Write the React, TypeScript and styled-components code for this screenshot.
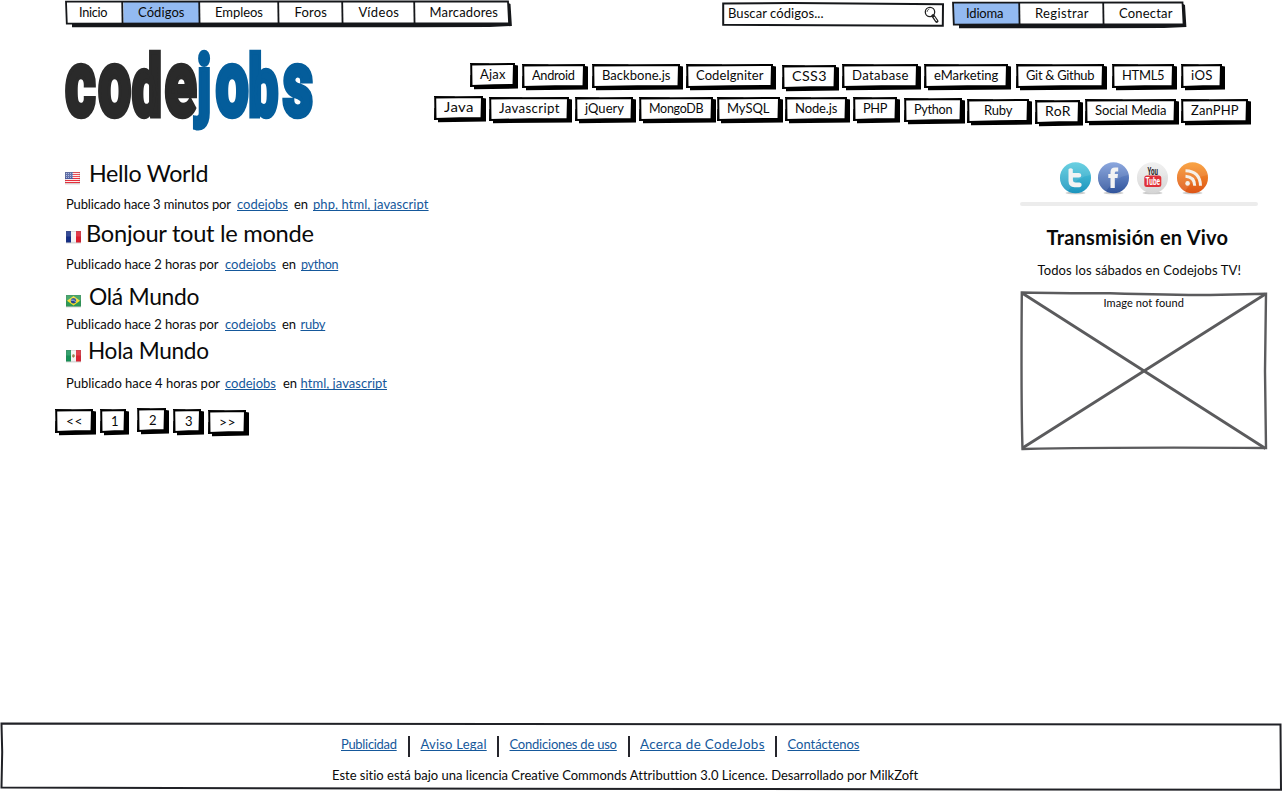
import React, { useLayoutEffect, useRef } from "react";
import styled, { createGlobalStyle } from "styled-components";

const Global = createGlobalStyle`
  * { box-sizing: border-box; }
  body { margin: 0; background: #fff; color: #0a0a0a; font-family: Lato, "Open Sans", sans-serif; font-size: 13px; overflow: hidden; }
`;

const Page = styled.div`
  width: 1282px;
  height: 791px;
  display: flex;
  flex-direction: column;
  background: #fff;
`;

type TextStyle = { $w: number; $gap?: number; $size?: number; $bold?: boolean; $line?: number };
const TextBox = styled.span<TextStyle>`
  position: relative;
  flex: none;
  display: block;
  width: ${(p) => p.$w}px;
  margin-left: ${(p) => p.$gap ?? 0}px;
  font-size: ${(p) => p.$size ?? 13}px;
  font-weight: ${(p) => (p.$bold ? 700 : 400)};
  line-height: ${(p) => p.$line ?? 16}px;
  white-space: pre;
`;
const Ink = styled.span`
  display: inline-block;
  transform-origin: 0 0;
`;
const LinkInk = styled(Ink).attrs({ as: "a" })`
  color: #15589b;
  text-decoration: underline;
  text-decoration-thickness: 1px;
  text-underline-offset: 1px;
  text-decoration-skip-ink: none;
`;

/* Spreads a label over a fixed measure: a little tracking first, then glyph width. */
function Label({ text, w, gap, size, bold, line, link }: {
  text: string; w: number; gap?: number; size?: number; bold?: boolean; line?: number; link?: boolean;
}) {
  const ref = useRef<HTMLElement>(null);
  useLayoutEffect(() => {
    const el = ref.current;
    if (!el || text.length < 2) return;
    el.style.letterSpacing = "0px";
    el.style.transform = "none";
    const goal = w + 0.5;
    const natural = el.getBoundingClientRect().width;
    const tracking = Math.max(-0.3, Math.min(0.35, (goal - natural) / (text.length - 1)));
    el.style.letterSpacing = `${tracking}px`;
    el.style.transform = `scaleX(${goal / (natural + tracking * (text.length - 1))})`;
  }, [text, w]);
  const C: any = link ? LinkInk : Ink;
  return (
    <TextBox $w={w} $gap={gap} $size={size} $bold={bold} $line={line}>
      <C ref={ref}>{text}</C>
    </TextBox>
  );
}

/* ---------- hand-drawn buttons ---------- */
const Backdrop = styled.svg`
  position: absolute;
  inset: 0;
  overflow: visible;
`;
const ButtonBox = styled.button<{ $w: number; $gap: number; $drop: number; $pad: number }>`
  position: relative;
  flex: none;
  display: flex;
  width: ${(p) => p.$w}px;
  height: 26px;
  margin: ${(p) => p.$drop}px 0 0 ${(p) => p.$gap}px;
  padding: 3.5px 0 0 ${(p) => p.$pad}px;
  border: 0;
  background: none;
  color: inherit;
  font: inherit;
  text-align: left;
`;

function SketchButton({ text, w, gap, drop, tw, pad = 10 }: {
  text: string; w: number; gap: number; drop: number; tw: number; pad?: number;
}) {
  return (
    <ButtonBox $w={w} $gap={gap} $drop={drop} $pad={pad}>
      <Backdrop width={w} height={26}>
        <path d={`M4 5L${w - 3} 2L${w} 2.5L${w} 25.5L4 26.2Z`} fill="#000" />
        <path d={`M1.2 1.4L${w - 4} 1L${w - 4.5} 22L${w / 2} 22.2L1.5 23Z`} fill="#fff" stroke="#000" strokeWidth="2" />
        <path d={`M0 .5L${w * 0.4} 1M1 12L.6 24`} stroke="#000" strokeWidth="1.2" />
      </Backdrop>
      <Label text={text} w={tw} />
    </ButtonBox>
  );
}

/* ---------- top bar ---------- */
const TopBar = styled.nav`
  display: flex;
  height: 51px;
  padding-left: 65px;
`;
const MenuBox = styled.div<{ $w: number; $gap?: number; $top: number }>`
  position: relative;
  flex: none;
  display: flex;
  width: ${(p) => p.$w}px;
  height: 28px;
  margin: ${(p) => p.$top}px 0 0 ${(p) => p.$gap ?? 0}px;
`;
const MenuItem = styled.a<{ $w: number; $pad: number }>`
  position: relative;
  display: flex;
  flex: none;
  width: ${(p) => p.$w}px;
  padding: 3px 0 0 ${(p) => p.$pad}px;
`;
type Entry = { text: string; w: number; pad: number; tw: number; on?: boolean };
function Menu({ items, gap, top }: { items: Entry[]; gap?: number; top: number }) {
  const total = items.reduce((s, i) => s + i.w, 0);
  let at = 0;
  const cells = items.map((i) => {
    const x = at;
    at += i.w;
    return { ...i, x };
  });
  return (
    <MenuBox $w={total + 2} $gap={gap} $top={top}>
      <Backdrop width={total + 2} height={28}>
        <path d={`M7 22L${total - 1} 22L${total - 1} 2L${total + 1} 3L${total + 2.4} 25L${total - 20} 26L${total - 94} 26.2L7 26.2Z`} fill="#15171a" />
        <path d={`M1 .6L${total - 2} .4L${total - 0.4} 22.2L1.6 22.6Z`} fill="#fff" />
        {cells.filter((c) => c.on).map((c) => (
          <rect key={c.text} x={c.x + 1.5} y="1" width={c.w - 1.5} height="21.5" fill="#93baf1" />
        ))}
        <path d={`M1 .6L${total - 1.5} .4L${total - 0.4} 22.4L${total / 2} 22.4L1.8 22.6Z`} fill="none" stroke="#15171a" strokeWidth="1.8" />
        {cells.slice(1).map((c) => (
          <path key={c.text} d={`M${c.x + 0.2} .6L${c.x + 0.6} 26`} stroke="#15171a" strokeWidth="1.8" />
        ))}
      </Backdrop>
      {items.map((i) => (
        <MenuItem key={i.text} $w={i.w} $pad={i.pad}>
          <Label text={i.text} w={i.tw} />
        </MenuItem>
      ))}
    </MenuBox>
  );
}
const SearchBox = styled.div`
  position: relative;
  flex: none;
  display: flex;
  width: 222px;
  height: 25px;
  margin: 2px 0 0 210px;
  padding: 3px 0 0 6.5px;
`;
const Lens = styled.svg`
  position: relative;
  flex: none;
  margin-left: 100.5px;
  margin-top: 1px;
`;

/* ---------- header ---------- */
const Header = styled.header`
  display: flex;
  height: 101px;
`;
const Logo = styled.svg`
  flex: none;
  overflow: visible;
  margin-left: 65px;
`;
const Tags = styled.div`
  margin: 11.5px 0 0 119px;
`;
const TagRow = styled.div<{ $indent: number }>`
  display: flex;
  height: 33px;
  padding-left: ${(p) => p.$indent}px;
`;

type Btn = [string, number, number, number, number, number?];
const tagsTop: Btn[] = [
  ["Ajax", 48, 0, 0, 25], ["Android", 66, 4, 1, 42.5], ["Backbone.js", 91, 4, 1, 68],
  ["CodeIgniter", 90, 3, 1, 67], ["CSS3", 57, 6, 2, 34], ["Database", 79, 3, 1, 56],
  ["eMarketing", 87, 3, 1, 64], ["Git & Github", 91, 5, 1, 68], ["HTML5", 65, 5, 1, 42], ["iOS", 44, 4, 1, 21],
];
const tagsBottom: Btn[] = [
  ["Java", 52, 0, 0, 29], ["Javascript", 83, 3, 1, 60], ["jQuery", 61, 3, 1, 38.5],
  ["MongoDB", 77, 3, 1, 54], ["MySQL", 66, 1, 1, 42], ["Node.js", 65, 2, 1, 42], ["PHP", 47, 3, 1, 24],
  ["Python", 61, 4, 2, 38], ["Ruby", 65, 2, 3, 28, 17], ["RoR", 48, 3, 4, 25],
  ["Social Media", 94, 2, 3, 71], ["ZanPHP", 70, 2, 3, 47],
];
const pages: Btn[] = [
  ["<<", 41, 0, 1, 16, 11], ["1", 29, 4, 1, 7, 11], ["2", 32, 8, 0, 7, 12], ["3", 31, 4, 1, 7, 12], [">>", 41, 4, 2, 16, 11],
];
const buttons = (list: Btn[]) =>
  list.map(([text, w, gap, drop, tw, pad]) => (
    <SketchButton key={text} text={text} w={w} gap={gap} drop={drop} tw={tw} pad={pad} />
  ));

/* ---------- content ---------- */
const Main = styled.main`
  display: flex;
  height: 570px;
`;
const Posts = styled.section`
  width: 1020px;
  padding-top: 7px;
`;
const Post = styled.article<{ $h: number }>`
  height: ${(p) => p.$h}px;
`;
const TitleRow = styled.div<{ $h: number; $indent: number }>`
  display: flex;
  height: ${(p) => p.$h}px;
  padding-left: ${(p) => p.$indent}px;
`;
const MetaRow = styled.div`
  display: flex;
  padding-left: 66px;
`;
const Flag = styled.svg<{ $top: number }>`
  flex: none;
  margin-top: ${(p) => p.$top}px;
`;
const Pager = styled.div`
  display: flex;
  padding-left: 55px;
`;

function Country({ code, top }: { code: string; top: number }) {
  return (
    <Flag $top={top} width="15" height="13" viewBox="0 0 15 13">
      <rect x="0" y="11" width="15" height="1.6" fill="#ccc" opacity=".6" />
      {code === "us" && (
        <>
          <rect width="15" height="11.5" fill="#fff" />
          {[0, 1, 2, 3, 4, 5].map((i) => <rect key={i} y={i * 2} width="15" height="1.1" fill="#e8303c" />)}
          <rect width="8" height="7" fill="#4a5ca0" />
          {[1, 3, 5].map((y) => <path key={y} d={`M1 ${y + 0.5}H8`} stroke="#c3cae5" strokeWidth=".8" strokeDasharray="1 1" />)}
        </>
      )}
      {code === "fr" && (<><rect width="15" height="11.5" fill="#f5f5f5" /><rect width="5" height="11.5" fill="#142e86" /><rect x="10" width="5" height="11.5" fill="#dc1d2e" /></>)}
      {code === "br" && (<><rect width="15" height="11.5" fill="#2c9b58" /><path d="M7.5 1L14 5.8L7.5 10.5L1 5.8Z" fill="#f6dc2f" /><circle cx="7.5" cy="5.8" r="2.7" fill="#24468f" /><path d="M5 5.2Q8 4.8 9.9 6.8" stroke="#c8dbe8" strokeWidth=".7" fill="none" /></>)}
      {code === "mx" && (<><rect width="15" height="11.5" fill="#f4f4f4" /><rect width="5" height="11.5" fill="#169257" /><rect x="10" width="5" height="11.5" fill="#dc2433" /><path d="M6.2 4.8L8 4L9 6L7.6 7.7L6.3 7Z" fill="#9b7a4c" /></>)}
      <rect width="15" height="5.5" fill="#fff" opacity=".14" />
      <rect x=".4" y=".4" width="14.2" height="10.8" fill="none" stroke="#555" strokeOpacity=".2" strokeWidth=".7" />
    </Flag>
  );
}

const posts = [
  { code: "us", indent: 64.5, flag: 13, title: "Hello World", gap: 9, tw: 119, h: 60, th: 37, intro: "Publicado hace 3 minutos por", iw: 164.5, lg: 6.5, en: 6.5, tg: 5.5, tags: "php, html, javascript", gw: 115 },
  { code: "fr", indent: 65.5, flag: 12, title: "Bonjour tout le monde", gap: 5.5, tw: 227.5, h: 63, th: 37, intro: "Publicado hace 2 horas por", iw: 152, lg: 7, en: 6.5, tg: 5, tags: "python", gw: 37 },
  { code: "br", indent: 65.5, flag: 13, title: "Olá Mundo", gap: 8, tw: 110, h: 54, th: 34, intro: "Publicado hace 2 horas por", iw: 152, lg: 7, en: 6.5, tg: 5, tags: "ruby", gw: 24.5 },
  { code: "mx", indent: 65.5, flag: 14, title: "Hola Mundo", gap: 7.5, tw: 120.5, h: 72, th: 39, intro: "Publicado hace 4 horas por", iw: 153.5, lg: 5.5, en: 7.5, tg: 4, tags: "html, javascript", gw: 86 },
];

/* ---------- sidebar ---------- */
const Side = styled.aside`
  width: 247px;
`;
const Social = styled.div`
  display: flex;
  height: 50px;
  padding: 9px 0 0 39px;
`;
const Badge = styled.svg<{ $gap?: number }>`
  flex: none;
  margin-left: ${(p) => p.$gap ?? 0}px;
`;
const Rule = styled.div`
  width: 238px;
  height: 4px;
  border-radius: 2px;
  background: #ececec;
`;
const SideTitle = styled.div`
  display: flex;
  margin: 19px 0 0 26.5px;
`;
const SideText = styled.div`
  display: flex;
  margin: 13px 0 0 17.5px;
`;
const Missing = styled.div`
  position: relative;
  display: flex;
  height: 160px;
  margin-top: 13px;
  padding: 4px 0 0 83.5px;
`;

function SocialIcon({ id, from, to, gap, children }: { id: string; from: string; to: string; gap?: number; children: React.ReactNode }) {
  return (
    <Badge $gap={gap} width="33" height="34" viewBox="0 0 33 34">
      <defs>
        <linearGradient id={id} x1="0" y1="0" x2="0" y2="1"><stop offset="0" stopColor={from} /><stop offset="1" stopColor={to} /></linearGradient>
      </defs>
      <ellipse cx="16.5" cy="32" rx="10" ry="1.3" fill="#999" opacity=".5" />
      <circle cx="16.5" cy="16.7" r="15.5" fill={`url(#${id})`} />
      <path d="M1.5 18A15 15 0 0 1 31.5 14Q19 15 9 30Q2 26 1.5 18Z" fill="#fff" opacity=".1" />
      {children}
    </Badge>
  );
}

/* ---------- footer ---------- */
const Footer = styled.footer`
  position: relative;
  height: 69px;
`;
const FooterLinks = styled.div`
  position: relative;
  display: flex;
  height: 31px;
  margin-left: 341px;
  padding-top: 14px;
`;
const Bar = styled.i<{ $gap: number }>`
  flex: none;
  width: 2px;
  height: 21px;
  margin: 0 0 0 ${(p) => p.$gap}px;
  background: #25252c;
`;
const Credit = styled.div`
  position: relative;
  display: flex;
  margin-left: 332px;
  padding-top: 14px;
`;

const DARK = { fill: "#2a2a2a", stroke: "#2a2a2a" };
const BLUE = { fill: "#045d9b", stroke: "#045d9b" };

export default function App() {
  return (
    <Page>
      <Global />
      <TopBar>
        <Menu top={1} items={[
          { text: "Inicio", w: 57, pad: 13.5, tw: 28 },
          { text: "Códigos", w: 77, pad: 16, tw: 46, on: true },
          { text: "Empleos", w: 79, pad: 16, tw: 47.5 },
          { text: "Foros", w: 64, pad: 16.5, tw: 32 },
          { text: "Vídeos", w: 72, pad: 16.5, tw: 40 },
          { text: "Marcadores", w: 95.5, pad: 15.5, tw: 68 },
        ]} />
        <SearchBox>
          <Backdrop width="222" height="25">
            <path d="M1.2 1.5L70 .9L221 2.3L220.8 23.7L100 23.2L1.2 22.8Z" fill="#fff" stroke="#15171a" strokeWidth="2" />
          </Backdrop>
          <Label text="Buscar códigos..." w={95} />
          <Lens width="16" height="18" viewBox="0 0 16 18" fill="none" stroke="#222">
            <circle cx="6" cy="6" r="4.7" strokeWidth="1.3" />
            <path d="M3 6Q3.2 3.6 5.4 3" strokeWidth=".7" />
            <path d="M9 9.8L12.8 15.2" strokeWidth="3.4" strokeLinecap="round" />
            <path d="M10 11L12.7 15" stroke="#fff" strokeWidth="1.1" />
          </Lens>
        </SearchBox>
        <Menu top={2} gap={8} items={[
          { text: "Idioma", w: 67, pad: 14.5, tw: 37, on: true },
          { text: "Registrar", w: 84, pad: 16, tw: 53 },
          { text: "Conectar", w: 81, pad: 16.5, tw: 53 },
        ]} />
      </TopBar>

      <Header>
        <Logo width="250" height="78" viewBox="0 0 250 78">
          <text transform="scale(.63 1)" y="65" fontFamily="Roboto" fontWeight="900" fontSize="94" strokeWidth="4.6" strokeLinejoin="miter"
            x="0 52.5 106 158 210 239 291 345.5">
            <tspan {...DARK}>co</tspan><tspan {...DARK} fontSize="85">d</tspan><tspan {...DARK}>e</tspan><tspan {...BLUE} fontSize="79" dy="-4">j</tspan><tspan {...BLUE} dy="4">o</tspan><tspan {...BLUE} fontSize="85">b</tspan><tspan {...BLUE}>s</tspan>
          </text>
        </Logo>
        <Tags>
          <TagRow $indent={36}>{buttons(tagsTop)}</TagRow>
          <TagRow $indent={0}>{buttons(tagsBottom)}</TagRow>
        </Tags>
      </Header>

      <Main>
        <Posts>
          {posts.map((p) => (
            <Post key={p.title} $h={p.h}>
              <TitleRow $h={p.th} $indent={p.indent}>
                <Country code={p.code} top={p.flag} />
                <Label text={p.title} w={p.tw} gap={p.gap} size={24} line={28} />
              </TitleRow>
              <MetaRow>
                <Label text={p.intro} w={p.iw} />
                <Label text="codejobs" w={50.5} gap={p.lg} link />
                <Label text="en" w={13.5} gap={p.en} />
                <Label text={p.tags} w={p.gw} gap={p.tg} link />
              </MetaRow>
            </Post>
          ))}
          <Pager>{buttons(pages)}</Pager>
        </Posts>

        <Side>
          <Social>
            <SocialIcon id="tw" from="#5accdf" to="#1b94bd">
              <path d="M9.5 8.2Q11.7 6.2 13.8 8.2V12H20Q22.5 12.3 22.3 14.4Q22 16.3 20 16.4H13.9V19Q14 21.5 16.5 21.6H20.5Q22.8 22 22.7 24Q22.5 26 20.5 26.2H15.5Q9.6 26 9.5 20Z" fill="#f3f3f3" />
            </SocialIcon>
            <SocialIcon id="fb" from="#7f9edb" to="#31549b" gap={5}>
              <path d="M13.5 27V17H11.3V13H13.5V10.8Q13.7 6.7 18 6.6H21.2V10.6H19.2Q17.8 10.6 17.8 12V13H21L20.5 17H17.8V27Z" fill="#f3f3f3" />
            </SocialIcon>
            <SocialIcon id="yt" from="#f0f0f0" to="#d5d5d5" gap={6}>
              <rect x="8.3" y="14.5" width="17" height="11.5" rx="2.5" fill="#df3038" />
              <text x="11.4" y="13.6" fontFamily="Roboto" fontWeight="700" fontSize="10" textLength="10.5" lengthAdjust="spacingAndGlyphs" fill="#222">You</text>
              <text x="9.6" y="24" fontFamily="Roboto" fontWeight="700" fontSize="10" textLength="14.5" lengthAdjust="spacingAndGlyphs" fill="#fff">Tube</text>
            </SocialIcon>
            <SocialIcon id="rss" from="#f99b30" to="#dd5416" gap={7}>
              <circle cx="11.6" cy="22.4" r="2.3" fill="#f5f0e9" />
              <path d="M9.5 15.3Q18.5 15.8 18.7 24.7M9.5 9.8Q24 10.2 24.5 24.7" fill="none" stroke="#f5f0e9" strokeWidth="3" />
            </SocialIcon>
          </Social>
          <Rule />
          <SideTitle><Label text="Transmisión en Vivo" w={181} size={20} line={24} bold /></SideTitle>
          <SideText><Label text="Todos los sábados en Codejobs TV!" w={203} /></SideText>
          <Missing>
            <Backdrop width="247" height="160" fill="none" stroke="#5b5b5d">
              <path d="M1.8 1.5Q60 2.5 90 2.2Q150 4 190 4L246 2.8L245 80L246 157Q100 156 2.5 158Q1 110 1.8 1.5Z" strokeWidth="2.4" />
              <path d="M2 2L245.5 157.5M2.5 157L245.5 3" strokeWidth="2.8" />
            </Backdrop>
            <Label text="Image not found" w={80} size={11} line={16} />
          </Missing>
        </Side>
      </Main>

      <Footer>
        <Backdrop width="1282" height="69">
          <path d="M1.5 1.5L500 2L1280.5 2.5L1281 67.8L700 67L400 66.5L1.5 65.5L2.2 30Z" fill="#fff" stroke="#202126" strokeWidth="2" />
        </Backdrop>
        <FooterLinks>
          <Label text="Publicidad" w={55.5} link />
          <Bar $gap={11.5} />
          <Label text="Aviso Legal" w={65.5} gap={10.5} link />
          <Bar $gap={11} />
          <Label text="Condiciones de uso" w={107} gap={10.5} link />
          <Bar $gap={11.5} />
          <Label text="Acerca de CodeJobs" w={124} gap={10} link />
          <Bar $gap={11} />
          <Label text="Contáctenos" w={71.5} gap={10.5} link />
        </FooterLinks>
        <Credit>
          <Label text="Este sitio está bajo una licencia Creative Commonds Attributtion 3.0 Licence. Desarrollado por MilkZoft" w={585} />
        </Credit>
      </Footer>
    </Page>
  );
}
